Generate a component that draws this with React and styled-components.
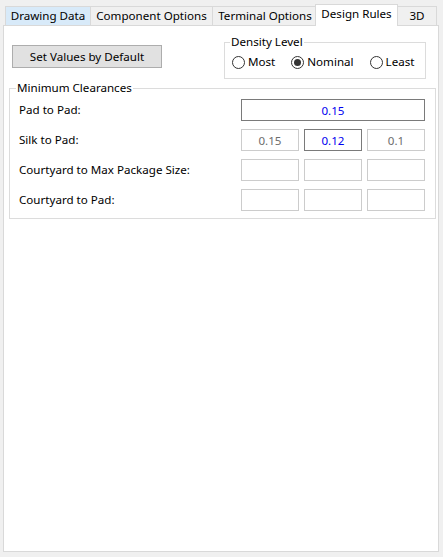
import React from "react";
import styled, { createGlobalStyle, css } from "styled-components";

const FONT = `"Noto Sans", "Open Sans", sans-serif`;
const SIZE = "11.6px";

const GlobalStyle = createGlobalStyle`
  html, body {
    margin: 0;
    padding: 0;
    background: #f0f0f0;
  }
  body {
    font-family: ${FONT};
    font-size: ${SIZE};
    color: #000;
  }
`;

const Window = styled.div`
  width: 443px;
  height: 557px;
  box-sizing: border-box;
  padding: 4px 0 0 3px;
  background: #f0f0f0;
  font-family: ${FONT};
  font-size: ${SIZE};
`;

const TabStrip = styled.div`
  display: flex;
  align-items: flex-end;
  height: 21px;
  padding-left: 2px;
`;

const Tab = styled.div`
  box-sizing: border-box;
  width: ${(p) => p.$w}px;
  height: 19px;
  margin-left: -1px;
  border: 1px solid #d9d9d9;
  border-bottom: none;
  background: ${(p) => (p.$hover ? "#d8eaf9" : "#f0f0f0")};
  display: flex;
  align-items: center;
  justify-content: center;
  line-height: 14px;
  white-space: nowrap;
  &:first-child {
    margin-left: 0;
  }
  ${(p) =>
    p.$selected &&
    css`
      position: relative;
      z-index: 1;
      height: 22px;
      margin-left: -3px;
      margin-bottom: -1px;
      background: #fff;
      padding-bottom: 3px;
    `}
`;

const Panel = styled.div`
  box-sizing: border-box;
  width: 436px;
  height: 527px;
  border: 1px solid #d9d9d9;
  background: #fff;
`;

const TopRow = styled.div`
  display: flex;
  align-items: flex-start;
  padding: 9px 0 0 8px;
`;

const Button = styled.button`
  box-sizing: border-box;
  width: 150px;
  height: 23px;
  margin-top: 10px;
  padding: 0;
  border: 1px solid #adadad;
  background: #e1e1e1;
  font-family: ${FONT};
  font-size: ${SIZE};
  color: #000;
`;

const Group = styled.fieldset`
  box-sizing: border-box;
  margin: ${(p) => p.$margin || 0};
  padding: 0;
  width: ${(p) => p.$w}px;
  min-width: 0;
  border: 1px solid #dcdcdc;
`;

const Legend = styled.legend`
  margin-left: ${(p) => p.$ml || 5}px;
  padding: 0 1px;
  line-height: 14px;
`;

const RadioRow = styled.div`
  display: flex;
  align-items: center;
  gap: 16px;
  height: 16px;
  padding: 5px 0 8px 7px;
`;

const RadioItem = styled.label`
  display: flex;
  align-items: center;
  gap: 3px;
  line-height: 14px;
`;

const RadioCircle = styled.span`
  box-sizing: border-box;
  width: 13px;
  height: 13px;
  border-radius: 50%;
  border: 1px solid #333;
  background: #fff;
  display: flex;
  align-items: center;
  justify-content: center;
  &::after {
    content: "";
    width: 7px;
    height: 7px;
    border-radius: 50%;
    background: ${(p) => (p.$checked ? "#333" : "transparent")};
  }
`;

const Grid = styled.div`
  display: grid;
  grid-template-columns: 1fr 58px 58px 58px;
  grid-auto-rows: 22px;
  column-gap: 5px;
  row-gap: 8px;
  padding: 4px 10px 7px 9px;
  align-items: center;
`;

const Label = styled.span`
  line-height: 14px;
  white-space: nowrap;
`;

const Field = styled.input`
  box-sizing: border-box;
  width: 100%;
  height: 22px;
  margin: 0;
  padding: 0;
  border: 1px solid ${(p) => (p.$active ? "#7a7a7a" : "#cccccc")};
  background: #fff;
  font-family: ${FONT};
  font-size: ${SIZE};
  text-align: center;
  color: ${(p) => (p.$active ? "#0000f0" : "#6d6d6d")};
  outline: none;
  grid-column: ${(p) => (p.$wide ? "2 / 5" : "auto")};
`;

const tabs = [
  { name: "Drawing Data", w: 86, hover: true },
  { name: "Component Options", w: 123 },
  { name: "Terminal Options", w: 106 },
  { name: "Design Rules", w: 83, selected: true },
  { name: "3D", w: 40 },
];

const radios = [
  { name: "Most" },
  { name: "Nominal", checked: true },
  { name: "Least" },
];

const rows = [
  { label: "Silk to Pad:", values: [["0.15"], ["0.12", true], ["0.1"]] },
  { label: "Courtyard to Max Package Size:", values: [[""], [""], [""]] },
  { label: "Courtyard to Pad:", values: [[""], [""], [""]] },
];

export default function App() {
  return (
    <>
      <GlobalStyle />
      <Window>
        <TabStrip>
          {tabs.map((t) => (
            <Tab key={t.name} $w={t.w} $hover={t.hover} $selected={t.selected}>
              {t.name}
            </Tab>
          ))}
        </TabStrip>
        <Panel>
          <TopRow>
            <Button>Set Values by Default</Button>
            <Group $w={202} $margin="0 0 0 62px">
              <Legend>Density Level</Legend>
              <RadioRow>
                {radios.map((r) => (
                  <RadioItem key={r.name}>
                    <RadioCircle $checked={r.checked} />
                    {r.name}
                  </RadioItem>
                ))}
              </RadioRow>
            </Group>
          </TopRow>
          <Group $w={427} $margin="2px 0 0 5px">
            <Legend $ml={6}>Minimum Clearances</Legend>
            <Grid>
              <Label>Pad to Pad:</Label>
              <Field $wide $active readOnly value="0.15" />
              {rows.map((row) => (
                <React.Fragment key={row.label}>
                  <Label>{row.label}</Label>
                  {row.values.map(([v, active], i) => (
                    <Field key={i} $active={active} readOnly value={v} />
                  ))}
                </React.Fragment>
              ))}
            </Grid>
          </Group>
        </Panel>
      </Window>
    </>
  );
}
